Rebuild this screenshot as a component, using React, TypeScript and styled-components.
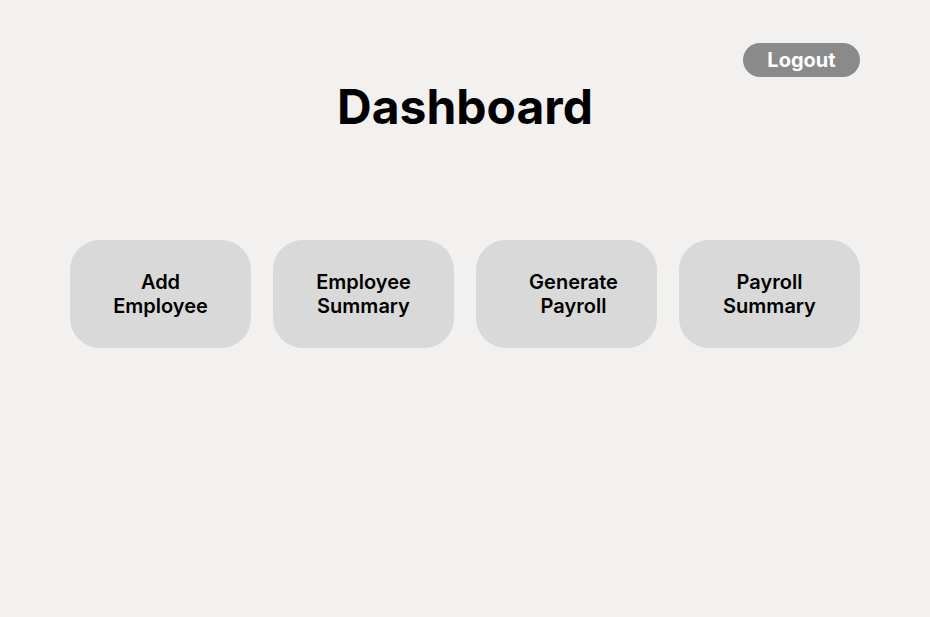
import React from 'react';
import styled, { createGlobalStyle } from 'styled-components';

const GlobalStyle = createGlobalStyle`
  html, body {
    margin: 0;
    padding: 0;
    background: #f2f1f0;
    font-family: Inter, "Noto Sans", sans-serif;
  }
`;

const Page = styled.div`
  min-height: 617px;
  padding: 43px 70px 0;
  box-sizing: border-box;
  display: flex;
  flex-direction: column;
`;

const TopBar = styled.div`
  display: flex;
  justify-content: flex-end;
`;

const LogoutButton = styled.button`
  width: 117px;
  height: 34px;
  border: none;
  border-radius: 17px;
  background: #8a8a8a;
  color: #ffffff;
  font-family: Inter, sans-serif;
  font-size: 20px;
  font-weight: 700;
  cursor: pointer;
  padding: 0;
`;

const Title = styled.h1`
  margin: 0;
  margin-top: 3px;
  text-align: center;
  font-size: 48px;
  line-height: 54px;
  font-weight: 700;
  color: #000;
`;

const Grid = styled.div`
  margin-top: 106px;
  display: grid;
  grid-template-columns: repeat(4, 1fr);
  gap: 22px;
`;

const Tile = styled.button<{ $shift?: number }>`
  height: 108px;
  border: none;
  border-radius: 30px;
  background: #d9d9d9;
  color: #000;
  font-family: Inter, sans-serif;
  font-size: 20px;
  line-height: 24px;
  font-weight: 600;
  cursor: pointer;
  padding: 0 0 0 ${p => p.$shift ?? 0}px;
  display: flex;
  align-items: center;
  justify-content: center;
  text-align: center;
`;

const tiles: { label: string[]; shift?: number }[] = [
  { label: ['Add', 'Employee'] },
  { label: ['Employee', 'Summary'] },
  { label: ['Generate', 'Payroll'], shift: 14 },
  { label: ['Payroll', 'Summary'], shift: -2 },
];

const App: React.FC = () => {
  return (
    <>
      <GlobalStyle />
      <Page>
        <TopBar>
          <LogoutButton>Logout</LogoutButton>
        </TopBar>
        <Title>Dashboard</Title>
        <Grid>
          {tiles.map(t => (
            <Tile key={t.label.join(' ')} $shift={t.shift}>
              <span>
                {t.label[0]}
                <br />
                {t.label[1]}
              </span>
            </Tile>
          ))}
        </Grid>
      </Page>
    </>
  );
};

export default App;
